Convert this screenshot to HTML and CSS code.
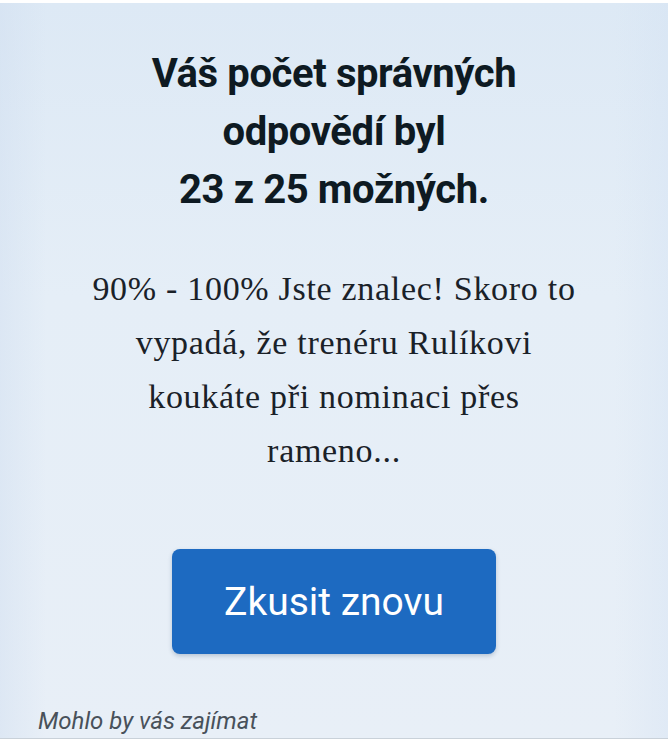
FILE: index.html
```html
<!DOCTYPE html>
<html lang="cs">
<head>
<meta charset="utf-8">
<title>Výsledek kvízu</title>
<link rel="stylesheet" href="styles.css">
</head>
<body>
<div class="page">
  <main class="result">
    <h1 class="score">Váš počet správných<br>odpovědí byl<br>23 z 25 možných.</h1>
    <p class="verdict">90% - 100% Jste znalec! Skoro to<br>vypadá, že trenéru Rulíkovi<br>koukáte při nominaci přes<br>rameno...</p>
    <div class="actions">
      <button class="retry" type="button">Zkusit znovu</button>
    </div>
  </main>
  <div class="related">Mohlo by vás zajímat</div>
</div>
<div class="below"></div>
</body>
</html>
```
FILE: styles.css
```css
html, body {
  margin: 0;
  padding: 0;
  background: #ffffff;
}
body {
  width: 668px;
  height: 750px;
  overflow: hidden;
}
.page {
  margin-top: 3px;
  height: 736px;
  box-sizing: border-box;
  border-bottom: 1px solid #c9d1d9;
  background:
    linear-gradient(90deg, rgba(208,222,240,0.45) 0%, rgba(220,232,245,0) 7%, rgba(220,232,245,0) 92%, rgba(212,226,243,0.4) 100%),
    linear-gradient(180deg, #dde9f5 0%, #e5eef7 40%, #e8eff7 100%);
  display: flex;
  flex-direction: column;
}
.result {
  flex: 1;
  display: flex;
  flex-direction: column;
  align-items: center;
  padding-top: 42px;
}
.score {
  margin: 0;
  font-family: Roboto, "Liberation Sans", sans-serif;
  font-weight: 700;
  font-size: 40px;
  line-height: 58px;
  color: #0e1a22;
  text-align: center;
  letter-spacing: -0.4px;
}
.verdict {
  margin: 43px 0 0;
  font-family: "Liberation Serif", serif;
  font-size: 34px;
  line-height: 54px;
  letter-spacing: 0.7px;
  color: #1a2128;
  text-align: center;
}
.actions {
  margin-top: 71px;
  display: flex;
  justify-content: center;
}
.retry {
  width: 324px;
  height: 105px;
  border: none;
  border-radius: 8px;
  background: #1d6ac1;
  color: #ffffff;
  font-family: Roboto, "Liberation Sans", sans-serif;
  font-weight: 400;
  font-size: 39px;
  box-shadow: 0 2px 4px rgba(40,70,110,0.25);
  cursor: pointer;
}
.related {
  padding: 0 0 2px 38px;
  font-family: Roboto, "Liberation Sans", sans-serif;
  font-style: italic;
  font-size: 24px;
  line-height: 30px;
  color: #48515a;
}
.below {
  height: 11px;
  background: #ffffff;
}
```
